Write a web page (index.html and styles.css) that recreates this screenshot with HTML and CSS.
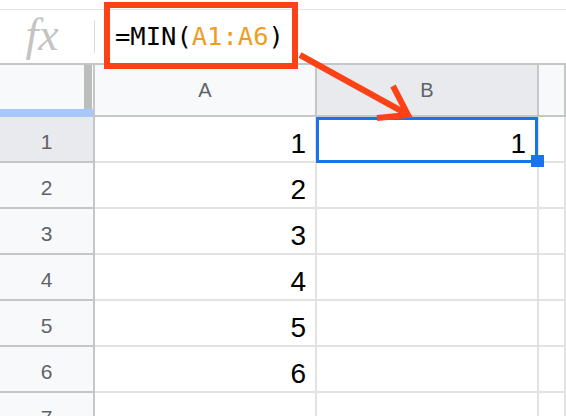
FILE: index.html
```html
<!DOCTYPE html>
<html>
<head>
<meta charset="utf-8">
<link rel="stylesheet" href="styles.css">
</head>
<body>
<div class="page">
  <div class="topstrip"></div>
  <div class="formula-bar">
    <div class="fx">fx</div>
    <div class="sep"></div>
    <div class="formula">=MIN(<span class="ref">A1:A6</span>)</div>
  </div>
  <div class="grid">
    <div class="corner"><div class="corner-top"><div class="handle"></div></div><div class="freeze"></div></div>
    <div class="colhead">A</div>
    <div class="colhead selected">B</div>
    <div class="colhead"></div>

    <div class="rowhead selected">1</div>
    <div class="cell">1</div>
    <div class="cell active">1<div class="sel"></div><div class="sel-handle"></div></div>
    <div class="cell"></div>

    <div class="rowhead">2</div>
    <div class="cell">2</div>
    <div class="cell"></div>
    <div class="cell"></div>

    <div class="rowhead">3</div>
    <div class="cell">3</div>
    <div class="cell"></div>
    <div class="cell"></div>

    <div class="rowhead">4</div>
    <div class="cell">4</div>
    <div class="cell"></div>
    <div class="cell"></div>

    <div class="rowhead">5</div>
    <div class="cell">5</div>
    <div class="cell"></div>
    <div class="cell"></div>

    <div class="rowhead">6</div>
    <div class="cell">6</div>
    <div class="cell"></div>
    <div class="cell"></div>

    <div class="rowhead">7</div>
    <div class="cell"></div>
    <div class="cell"></div>
    <div class="cell"></div>
  </div>
  <div class="annot-box"></div>
  <svg class="arrow" width="566" height="416" viewBox="0 0 566 416">
    <line x1="300" y1="55" x2="405" y2="113" stroke="#fb4216" stroke-width="6"/>
    <polyline points="393,86 408,115 377,118" fill="none" stroke="#fb4216" stroke-width="6" stroke-linejoin="miter"/>
  </svg>
</div>
</body>
</html>
```

FILE: styles.css
```css
body {
  margin: 0;
  background: #fff;
  font-family: "Liberation Sans", Arial, sans-serif;
}
.page {
  position: relative;
  width: 566px;
  height: 416px;
  overflow: hidden;
}
.topstrip {
  height: 9px;
  border-bottom: 1px solid #e3e3e3;
}
.formula-bar {
  display: flex;
  align-items: center;
  height: 53px;
  border-bottom: 2px solid #c4c7c5;
}
.fx {
  width: 84px;
  padding-right: 10px;
  text-align: center;
  font-family: "Liberation Serif", serif;
  font-style: italic;
  font-size: 46px;
  color: #c4c4c4;
  line-height: 49px;
  margin-bottom: 4px;
}
.sep {
  width: 1px;
  height: 33px;
  background: #dadce0;
}
.formula {
  padding-left: 20px;
  font-family: "DejaVu Sans Mono", monospace;
  font-size: 25.5px;
  line-height: 53px;
  color: #000;
}
.ref {
  color: #f29c1f;
}
.grid {
  display: grid;
  grid-template-columns: 95px 222px 222px 27px;
  grid-template-rows: 52px;
  grid-auto-rows: 46px;
}
.corner {
  display: flex;
  flex-direction: column;
  border-right: 2px solid #c4c7c5;
}
.corner-top {
  flex: 1;
  display: flex;
  justify-content: flex-end;
  background: #f8f9fa;
}
.handle {
  width: 8px;
  margin-right: 1px;
  background: #bdbdbd;
}
.freeze {
  height: 8px;
  background: #a8c7fa;
}
.colhead {
  box-sizing: border-box;
  background: #f8f9fa;
  border-right: 2px solid #c4c7c5;
  border-bottom: 2px solid #c4c7c5;
  color: #5f6368;
  font-size: 20px;
  line-height: 50px;
  text-align: center;
}
.colhead.selected,
.rowhead.selected {
  background: #e8eaed;
}
.rowhead {
  box-sizing: border-box;
  background: #f8f9fa;
  border-right: 2px solid #c4c7c5;
  border-bottom: 2px solid #c4c7c5;
  color: #5f6368;
  font-size: 21px;
  padding-top: 5px;
  line-height: 39px;
  text-align: center;
}
.cell {
  box-sizing: border-box;
  border-right: 2px solid #e2e2e2;
  border-bottom: 2px solid #e2e2e2;
  color: #000;
  font-size: 28px;
  padding: 9px 9px 0 0;
  line-height: 35px;
  text-align: right;
}
.cell.active {
  position: relative;
  padding-right: 11px;
}
.sel {
  position: absolute;
  left: -1px;
  top: 0;
  right: -1px;
  bottom: -2px;
  border: 3px solid #1a73e8;
}
.sel-handle {
  position: absolute;
  left: 214px;
  top: 38px;
  width: 13px;
  height: 12px;
  background: #1a73e8;
}
.annot-box {
  position: absolute;
  left: 104px;
  top: 2px;
  width: 194px;
  height: 67px;
  box-sizing: border-box;
  border: 6px solid #fb4216;
}
.arrow {
  position: absolute;
  left: 0;
  top: 0;
  pointer-events: none;
}
```
